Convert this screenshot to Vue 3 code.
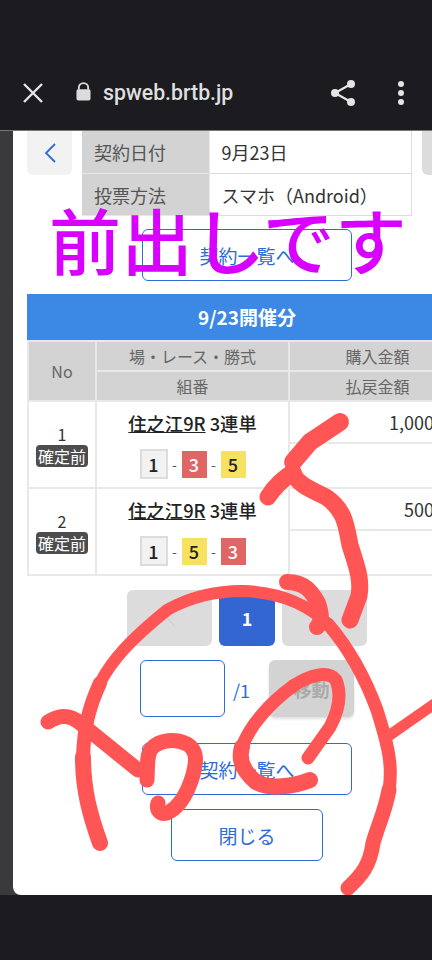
<script setup>
const rows = [
  { no: 1, race: '住之江9R', type: '3連単', nums: [1, 3, 5], amount: '1,000円' },
  { no: 2, race: '住之江9R', type: '3連単', nums: [1, 5, 3], amount: '500円' },
]
const colourOf = { 1: 'white', 3: 'red', 5: 'yellow' }
</script>

<template>
  <div class="screen">
    <header class="bar">
      <svg class="close" viewBox="0 0 20 20" width="20" height="20"><path d="M1 1 L19 19 M19 1 L1 19" stroke="#e4e4e4" stroke-width="2.4" fill="none"/></svg>
      <svg class="lock" viewBox="0 0 16 20" width="15" height="19"><path d="M3 8 V6 a5 5 0 0 1 10 0 V8" stroke="#dcdcdc" stroke-width="2" fill="none"/><rect x="0.5" y="7.500" width="15" height="12" rx="2" fill="#dcdcdc"/></svg>
      <span class="url">spweb.brtb.jp</span>
      <svg class="share" viewBox="0 0 26 28" width="26" height="28"><path d="M21 5 L5 14 L21 23" stroke="#e4e4e4" stroke-width="2.2" fill="none"/><circle cx="21" cy="5" r="4" fill="#e4e4e4"/><circle cx="5" cy="14" r="4" fill="#e4e4e4"/><circle cx="21" cy="23" r="4" fill="#e4e4e4"/></svg>
      <svg class="more" viewBox="0 0 6 24" width="6" height="24"><circle cx="3" cy="3" r="3" fill="#e4e4e4"/><circle cx="3" cy="12" r="3" fill="#e4e4e4"/><circle cx="3" cy="21" r="3" fill="#e4e4e4"/></svg>
    </header>

    <div class="stage">
      <main class="card">
        <div class="top">
          <button class="back">
            <svg viewBox="0 0 12 20" width="12" height="20"><path d="M11 1 L2 10 L11 19" stroke="#2e6bd6" stroke-width="1.800" fill="none"/></svg>
          </button>
          <table class="info">
            <tbody>
              <tr><th>契約日付</th><td>9月23日</td></tr>
              <tr><th>投票方法</th><td>スマホ（Android）</td></tr>
            </tbody>
          </table>
          <div class="forward"></div>
        </div>

        <button class="outline wide first">契約一覧へ</button>

        <div class="caption">9/23開催分</div>
        <table class="list">
          <colgroup><col class="c1" /><col class="c2" /><col class="c3" /></colgroup>
          <thead>
            <tr><th rowspan="2">No</th><th>場・レース・勝式</th><th>購入金額</th></tr>
            <tr><th>組番</th><th>払戻金額</th></tr>
          </thead>
          <tbody>
            <template v-for="r in rows" :key="r.no">
              <tr class="upper">
                <td rowspan="2" class="no">
                  <div>{{ r.no }}</div>
                  <span class="tag">確定前</span>
                </td>
                <td rowspan="2" class="race">
                  <div class="name"><u>{{ r.race }}</u> {{ r.type }}</div>
                  <div class="nums">
                    <template v-for="(n, i) in r.nums" :key="i">
                      <span v-if="i" class="dash">-</span>
                      <span class="num" :class="colourOf[n]">{{ n }}</span>
                    </template>
                  </div>
                </td>
                <td class="amount">{{ r.amount }}</td>
              </tr>
              <tr class="lower"><td class="amount"></td></tr>
            </template>
          </tbody>
        </table>

        <nav class="pager">
          <button class="page">
            <svg viewBox="0 0 10 16" width="10" height="16"><path d="M9 1 L2 8 L9 15" stroke="#cfcfcf" stroke-width="1.500" fill="none"/></svg>
          </button>
          <button class="page current">1</button>
          <button class="page"></button>
        </nav>

        <div class="jump">
          <input class="field" type="text" />
          <span class="total">/1</span>
          <button class="go">移動</button>
        </div>

        <button class="outline wide second">契約一覧へ</button>
        <button class="outline shut">閉じる</button>
      </main>

      <svg class="scribble" viewBox="0 0 432 765" width="432" height="765">
        <g transform="translate(0 -130)" fill="none" stroke="#ff5555" stroke-linecap="round" stroke-linejoin="round">
          <path stroke-width="18" d="M340 422 L310 442 L293 462" />
          <path stroke-width="17" d="M268 497 C275 485 285 478 293 472 C296 484 312 490 326 497 C345 510 346 525 350 545 C356 565 362 578 359 596 L350 620" />
          <path stroke-width="16" d="M100 843 C90 815 83 790 83 757" />
          <path stroke-width="14" d="M83 757 C84 725 90 705 100 683" />
          <path stroke-width="12" d="M100 683 C112 660 130 640 167 610 C190 597 215 591 243 591 C275 592 305 602 328 624" />
          <path stroke-width="13" d="M328 624 C352 652 366 680 377 710 C388 745 393 765 389 790" />
          <path stroke-width="15" d="M389 790 C385 812 378 825 373 843 C370 865 362 875 348 888" />
          <path stroke-width="16" d="M287 582 C305 582 312 592 318 603 C322 615 322 622 317 627" />
          <path stroke-width="15" d="M48 722 C58 716 68 713 80 723 L138 770" />
          <path stroke-width="15" d="M147 780 C148 765 146 755 152 748 C160 740 175 738 187 744 C197 750 197 760 193 775 C187 795 178 808 167 813 C160 815 156 810 158 803" />
          <path stroke-width="16" d="M310 780 C295 786 270 790 256 782 C244 772 238 760 242 747" />
          <path stroke-width="13" d="M242 747 C250 725 270 703 293 686 C310 675 328 670 336 680 C342 695 338 712 330 727 L308 758" />
          <path stroke-width="11" d="M387 737 L440 700" />
        </g>
      </svg>
      <div class="stamp">前出しです</div>
    </div>

    <footer class="foot"></footer>
  </div>
</template>

<style>
html, body { margin: 0; background: #1b1b20; }
</style>

<style scoped>
.screen {
  width: 432px;
  height: 960px;
  overflow: hidden;
  display: flex;
  flex-direction: column;
  background: #1b1b20;
  font-family: "Noto Sans CJK JP", "Noto Sans", sans-serif;
}
.bar {
  box-sizing: border-box;
  height: 131px;
  flex: none;
  display: flex;
  align-items: center;
  padding: 55px 0 0 23px;
  border-bottom: 1px solid #77777a;
}
.lock { margin-left: 33px; margin-top: -2px; }
.url {
  margin-left: 12px;
  font: 500 21.300px "Roboto", sans-serif;
  color: #dfdfdf;
  flex: 1;
}
.more { margin: 0 28px 0 42px; }
.stage {
  position: relative;
  flex: none;
  height: 764px;
  background: #3a3a3c;
  padding-left: 13px;
}
.card {
  box-sizing: border-box;
  height: 764px;
  background: #fff;
  border-radius: 0 0 0 8px;
  padding-left: 14px;
  overflow: hidden;
  display: flex;
  flex-direction: column;
  align-items: flex-start;
}
.top { display: flex; align-items: flex-start; flex: none; }
.back {
  width: 45px;
  height: 44px;
  border: 0;
  padding: 0;
  background: #f2f2f2;
  border-radius: 0 0 6px 6px;
  display: flex;
  align-items: center;
  justify-content: center;
}
.info {
  margin-left: 10px;
  width: 330px;
  table-layout: fixed;
  border-collapse: collapse;
  font-size: 18px;
}
.info th {
  width: 127px;
  height: 42px;
  padding: 0 0 0 12px;
  box-sizing: border-box;
  background: #d3d3d3;
  border-bottom: 1px solid #e8e8e8;
  border-right: 1px solid #e8e8e8;
  font-weight: 400;
  text-align: left;
  color: #555;
}
.info td {
  height: 42px;
  padding: 0 0 0 12px;
  border: 1px solid #dcdcdc;
  border-top: 0;
  color: #333;
}
.info tr:last-child th,
.info tr:last-child td { height: 41px; }
.forward {
  width: 40px;
  height: 44px;
  margin-left: 10px;
  background: #dcdcdc;
  border-radius: 0 0 0 6px;
}
.outline {
  display: block;
  box-sizing: border-box;
  background: #fff;
  border: 1.500px solid #2e6bd6;
  border-radius: 6px;
  color: #2e6bd6;
  font: 400 19px "Noto Sans CJK JP", sans-serif;
  padding: 0;
}
.wide { width: 210px; height: 52px; margin-left: 115px; }
.first { margin-top: 13px; }
.caption {
  margin-top: 13px;
  flex: none;
  width: 405px;
  height: 46px;
  line-height: 46px;
  background: #3c88e5;
  color: #fff;
  font-size: 19px;
  font-weight: 700;
  text-align: center;
  padding-left: 35px;
  box-sizing: border-box;
}
.list {
  flex: none;
  width: 440px;
  table-layout: fixed;
  border-collapse: collapse;
}
.c1 { width: 68px; }
.c2 { width: 193px; }
.list th {
  background: #d3d3d3;
  border: 2px solid #e8e8e8;
  font-size: 16px;
  font-weight: 400;
  color: #666;
  height: 28px;
  padding: 0;
}
.list td { border: 2px solid #e8e8e8; padding: 0; color: #333; }
.upper td { height: 40px; }
.lower td { height: 43px; }
.no { text-align: center; font-size: 16px; line-height: 22px; }
.tag {
  display: inline-block;
  background: #4d4d4d;
  color: #fff;
  font-size: 16px;
  line-height: 22px;
  padding: 0 2px;
  border-radius: 4px;
}
.race { text-align: center; }
.name { font-size: 18.300px; font-weight: 500; line-height: 26px; color: #222; }
.nums {
  margin-top: 13px;
  display: flex;
  justify-content: center;
  align-items: center;
  gap: 4px;
}
.dash { font-size: 14px; color: #555; width: 6px; }
.num {
  box-sizing: border-box;
  width: 25px;
  height: 27px;
  line-height: 27px;
  font-size: 18px;
  font-weight: 500;
  text-align: center;
  color: #222;
}
.num.white { width: 28px; height: 30px; line-height: 26px; background: #f2f2f2; border: 2px solid #dcdcdc; }
.num.red { background: #e06666; color: #fff; }
.num.yellow { background: #f7e160; }
.amount { text-align: right; font-size: 18px; padding-right: 13px !important; }
.pager {
  margin: 14px 0 0 100px;
  display: flex;
  gap: 7px;
  flex: none;
}
.page {
  width: 85px;
  height: 56px;
  border: 0;
  padding: 0;
  border-radius: 6px;
  background: #dcdcdc;
  display: flex;
  align-items: center;
  justify-content: center;
}
.page.current {
  width: 56px;
  background: #3366d0;
  color: #fff;
  font: 700 18px "Noto Sans CJK JP", sans-serif;
}
.jump {
  margin: 14px 0 0 113px;
  display: flex;
  align-items: flex-start;
  flex: none;
}
.field {
  box-sizing: border-box;
  width: 85px;
  height: 57px;
  border: 1.500px solid #2e6bd6;
  border-radius: 6px;
  background: #fff;
  padding: 0;
}
.total { margin: 14px 0 0 8px; width: 36px; color: #2e6bd6; font-size: 18px; line-height: 32px; }
.go {
  width: 85px;
  height: 57px;
  border: 0;
  padding: 0;
  border-radius: 6px;
  background: #d3d3d3;
  color: #aaa;
  font: 700 18px "Noto Sans CJK JP", sans-serif;
  box-shadow: 0 2px 3px rgba(0, 0, 0, .12);
}
.second { margin-top: 26px; }
.shut { width: 152px; height: 52px; margin: 14px 0 0 144px; }
.scribble { position: absolute; left: 0; top: -1px; pointer-events: none; }
.stamp {
  position: absolute;
  left: 49px;
  top: 57px;
  font-size: 72px;
  font-weight: 500;
  line-height: 100px;
  color: #d800ff;
  white-space: nowrap;
  pointer-events: none;
}
.foot { flex: 1; background: #1b1b20; }
</style>
